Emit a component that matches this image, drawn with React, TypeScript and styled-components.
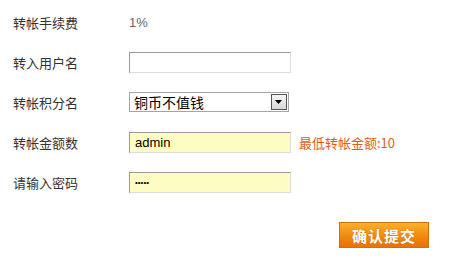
import React from "react";
import styled, { createGlobalStyle } from "styled-components";

const Global = createGlobalStyle`
  html, body { margin: 0; padding: 0; background: #fff; }
  body { font-family: "Liberation Sans", "Noto Sans CJK SC", sans-serif; }
`;

const Page = styled.div`
  width: 450px;
  height: 262px;
  padding: 2px 21px 0 13px;
  box-sizing: border-box;
  display: flex;
  flex-direction: column;
`;

const Row = styled.div`
  display: grid;
  grid-template-columns: 116px auto 1fr;
  align-items: center;
  height: 40px;
`;

const Label = styled.div`
  font-family: "Noto Sans CJK SC", sans-serif;
  font-size: 13px;
  color: #333;
`;

const Value = styled.div`
  font-size: 13px;
  color: #666;
`;

const TextInput = styled.input<{ $filled?: boolean }>`
  width: 162px;
  height: 21px;
  box-sizing: border-box;
  border-style: solid;
  border-width: 1px;
  border-color: #9a9a9a #dcdcdc #dcdcdc #9a9a9a;
  background: ${(p) => (p.$filled ? "#fdfdc3" : "#fff")};
  padding: 0 5px;
  font-family: "Liberation Sans", sans-serif;
  font-size: 13px;
  color: #000;
  outline: none;
`;

const PassInput = styled(TextInput)`
  font-size: 8px;
`;

const SelectBox = styled.div`
  width: 160px;
  height: 20px;
  box-sizing: border-box;
  border: 1px solid #a5a5a5;
  background: #fff;
  display: flex;
  align-items: center;
  justify-content: space-between;
  padding: 0 1px 0 4px;
`;

const SelectText = styled.span`
  font-family: "Noto Sans CJK SC", sans-serif;
  font-size: 14px;
  color: #000;
`;

const ArrowBox = styled.span`
  width: 16px;
  height: 16px;
  box-sizing: border-box;
  border: 1px solid #555;
  background: linear-gradient(#f4f4f4, #d8d8d8);
  display: flex;
  align-items: center;
  justify-content: center;
`;

const Hint = styled.span`
  font-family: "Noto Sans CJK SC", sans-serif;
  font-size: 13px;
  color: #e05e1a;
  margin-left: 8px;
`;

const Footer = styled.div`
  display: flex;
  justify-content: flex-end;
  margin-top: 20px;
`;

const SubmitButton = styled.button`
  width: 90px;
  height: 26px;
  border: 1px solid #d0700c;
  background: linear-gradient(#fbb02c, #f08a10 55%, #e8700a);
  color: #fff;
  font-family: "Noto Sans CJK SC", sans-serif;
  font-weight: bold;
  font-size: 15px;
  letter-spacing: 1px;
  text-shadow: 0 0 1px rgba(160, 70, 0, 0.6);
  padding: 0;
  cursor: pointer;
`;

export default function App() {
  return (
    <>
      <Global />
      <Page>
        <Row>
          <Label>转帐手续费</Label>
          <Value>1%</Value>
        </Row>
        <Row>
          <Label>转入用户名</Label>
          <TextInput defaultValue="" />
        </Row>
        <Row>
          <Label>转帐积分名</Label>
          <SelectBox>
            <SelectText>铜币不值钱</SelectText>
            <ArrowBox>
              <svg width="8" height="4" viewBox="0 0 8 4">
                <path d="M0 0 H7 L3.5 4 Z" fill="#000" />
              </svg>
            </ArrowBox>
          </SelectBox>
        </Row>
        <Row>
          <Label>转帐金额数</Label>
          <TextInput $filled defaultValue="admin" />
          <Hint>最低转帐金额:10</Hint>
        </Row>
        <Row>
          <Label>请输入密码</Label>
          <PassInput $filled type="password" defaultValue="12345" />
        </Row>
        <Footer>
          <SubmitButton>确认提交</SubmitButton>
        </Footer>
      </Page>
    </>
  );
}
